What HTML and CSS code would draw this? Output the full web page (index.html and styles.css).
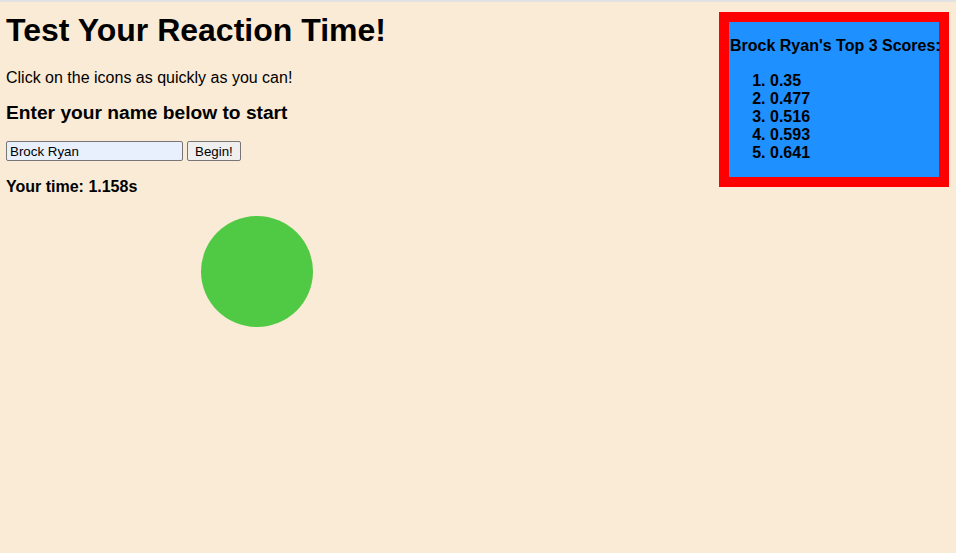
FILE: index.html
```html
<!DOCTYPE html>
<html>
<head>
<meta charset="utf-8">
<link rel="stylesheet" href="styles.css">
</head>
<body>
<div class="scores">
  <h4 class="scores-title">Brock Ryan's Top 3 Scores:</h4>
  <ol class="scores-list">
    <li>0.35</li>
    <li>0.477</li>
    <li>0.516</li>
    <li>0.593</li>
    <li>0.641</li>
  </ol>
</div>
<h1 class="title">Test Your Reaction Time!</h1>
<p class="intro">Click on the icons as quickly as you can!</p>
<h3 class="prompt">Enter your name below to start</h3>
<div class="form">
  <input class="name" type="text" value="Brock Ryan">
  <button class="begin">Begin!</button>
</div>
<p class="time">Your time: 1.158s</p>
<div class="target"></div>
</body>
</html>
```
FILE: styles.css
```css
html {
  background: #faebd7;
  border-top: 2px solid #e2e2e2;
}
body {
  margin: 0 7px 0 6px;
  font-family: "Liberation Sans", Arial, sans-serif;
  color: #000;
  position: relative;
  min-height: 551px;
}
.title {
  font-size: 32px;
  margin: 10px 0 0;
  line-height: 37px;
}
.intro {
  font-size: 16px;
  margin: 20px 0 0;
  line-height: 18px;
}
.prompt {
  font-size: 19.2px;
  margin: 15px 0 0;
  line-height: 22px;
}
.form {
  margin-top: 17px;
  display: flex;
  gap: 4px;
  height: 20px;
}
.name {
  width: 177px;
  box-sizing: border-box;
  height: 20px;
  margin: 0;
  padding: 1px 3px;
  font: 13.33px "Liberation Sans", Arial, sans-serif;
  background: #e8f0fe;
  border: 1px solid #767676;
  border-radius: 2px;
}
.begin {
  height: 20px;
  box-sizing: border-box;
  margin: 0;
  padding: 1px 7px;
  font: 13.33px "Liberation Sans", Arial, sans-serif;
  background: #efefef;
  border: 1px solid #767676;
  border-radius: 2px;
  color: #000;
}
.time {
  font-weight: bold;
  font-size: 16px;
  line-height: 18px;
  margin: 17px 0 0;
}
.scores {
  float: right;
  width: 210px;
  height: 155px;
  margin-top: 10px;
  background: #1e90ff;
  border: 10px solid #ff0000;
  white-space: nowrap;
}
.scores-title {
  font-size: 16px;
  margin: 15px 0 0 1px;
  line-height: 18px;
}
.scores-list {
  margin: 17px 0 0;
  padding-left: 41px;
  font-weight: bold;
  font-size: 16px;
  line-height: 18px;
}
.target {
  position: absolute;
  left: 195px;
  top: 214px;
  width: 112px;
  height: 111px;
  border-radius: 50%;
  background: #50ca45;
}
```
